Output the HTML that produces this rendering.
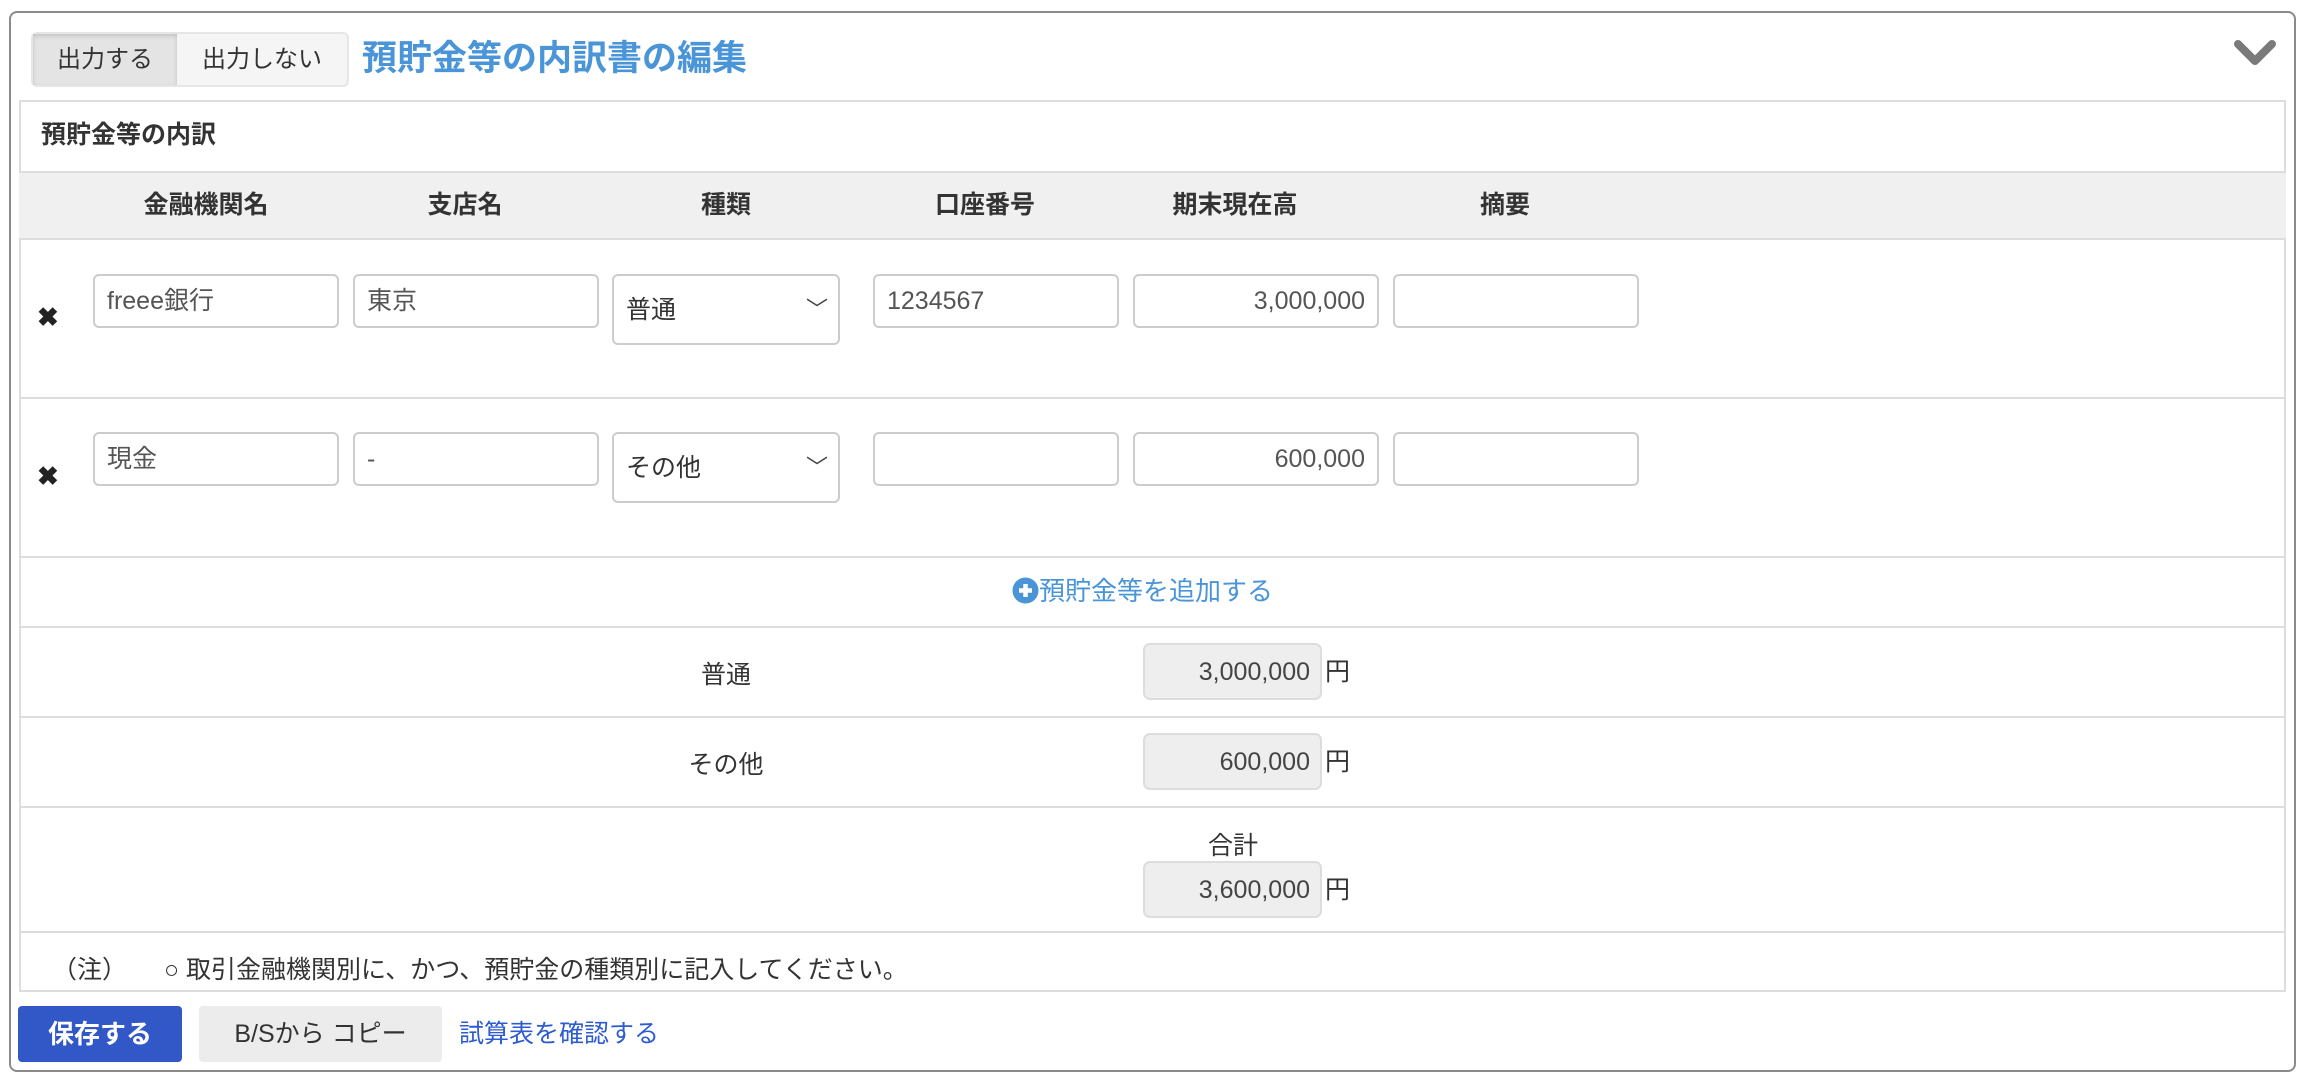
<!DOCTYPE html>
<html><head><meta charset="utf-8"><style>
*{box-sizing:border-box;margin:0;padding:0}
body{width:2308px;height:1082px;background:#fff;font-family:"Liberation Sans","Noto Sans CJK JP",sans-serif;color:#333;position:relative;overflow:hidden;font-size:25px}
.a{position:absolute}
.panel{left:9px;top:11px;width:2287px;height:1061px;border:2px solid #8a8a8a;border-radius:8px}
.inner{left:19px;top:100px;width:2267px;height:892px;border:2px solid #ddd}
.hl{position:absolute;left:19px;width:2267px;height:2px;background:#ddd}
.inp{position:absolute;height:54px;border:2px solid #ccc;border-radius:6px;background:#fff;padding:0 12px;line-height:50px;color:#555;font-size:25px}
.sel{height:71px;line-height:68px;color:#333}
.ro{position:absolute;width:179px;height:57px;background:#eee;border:2px solid #ddd;border-radius:7px;text-align:right;padding-right:10px;line-height:54px;font-size:25px;color:#444}
.th{position:absolute;top:171px;height:69px;line-height:69px;font-weight:bold;text-align:center;transform:translateX(-50%);font-size:25px;color:#333}
.x{position:absolute;font-size:26px;font-weight:bold;color:#222}
.lab{position:absolute;transform:translateX(-50%);font-size:25px}
</style></head><body>
<div class="a panel"></div>
<div class="a" style="left:31px;top:32px;width:318px;height:55px;border:2px solid #e6e6e6;border-radius:6px;background:#f5f5f5"></div>
<div class="a" style="left:33px;top:34px;width:144px;height:51px;background:#e4e4e4;box-shadow:inset 0 2px 5px rgba(0,0,0,.15);text-align:center;line-height:51px;font-size:24px;color:#333">出力する</div>
<div class="a" style="left:177px;top:34px;width:170px;height:51px;text-align:center;line-height:51px;font-size:24px;color:#333">出力しない</div>
<div class="a" style="left:362px;top:34px;font-size:35px;font-weight:bold;color:#4a94d8;line-height:50px">預貯金等の内訳書の編集</div>
<svg class="a" style="left:2233px;top:38px" width="44" height="32" viewBox="0 0 44 32"><path d="M5 6 L22 23 L39 6" fill="none" stroke="#7a7a7a" stroke-width="8" stroke-linecap="round" stroke-linejoin="round"/></svg>
<div class="a inner"></div>
<div class="a" style="left:41px;top:100px;height:71px;line-height:71px;font-weight:bold;font-size:25px">預貯金等の内訳</div>
<div class="a" style="left:19px;top:171px;width:2267px;height:69px;background:#f0f0f0;border-top:2px solid #ddd;border-bottom:2px solid #ddd"></div>
<div class="th" style="left:206px">金融機関名</div>
<div class="th" style="left:465px">支店名</div>
<div class="th" style="left:726px">種類</div>
<div class="th" style="left:985px">口座番号</div>
<div class="th" style="left:1235px">期末現在高</div>
<div class="th" style="left:1505px">摘要</div>
<!-- row1 -->
<div class="x" style="left:37px;top:302px">✖</div>
<div class="inp" style="left:93px;top:274px;width:246px">freee銀行</div>
<div class="inp" style="left:353px;top:274px;width:246px">東京</div>
<div class="inp sel" style="left:612px;top:274px;width:228px">普通<span style="position:absolute;right:10px;top:0;font-size:22px;color:#444">﹀</span></div>
<div class="inp" style="left:873px;top:274px;width:246px">1234567</div>
<div class="inp" style="left:1133px;top:274px;width:246px;text-align:right">3,000,000</div>
<div class="inp" style="left:1393px;top:274px;width:246px"></div>
<div class="hl" style="top:397px"></div>
<!-- row2 -->
<div class="x" style="left:37px;top:461px">✖</div>
<div class="inp" style="left:93px;top:432px;width:246px">現金</div>
<div class="inp" style="left:353px;top:432px;width:246px">-</div>
<div class="inp sel" style="left:612px;top:432px;width:228px">その他<span style="position:absolute;right:10px;top:0;font-size:22px;color:#444">﹀</span></div>
<div class="inp" style="left:873px;top:432px;width:246px"></div>
<div class="inp" style="left:1133px;top:432px;width:246px;text-align:right">600,000</div>
<div class="inp" style="left:1393px;top:432px;width:246px"></div>
<div class="hl" style="top:556px"></div>
<div class="a" style="left:1012px;top:568px;line-height:46px;font-size:26px;color:#4a94d8;white-space:nowrap"><svg width="27" height="27" viewBox="0 0 27 27" style="vertical-align:-4px"><circle cx="13.5" cy="13.5" r="13" fill="#4a94d8"/><path d="M13.5 7v13M7 13.5h13" stroke="#fff" stroke-width="4.5"/></svg>預貯金等を追加する</div>
<div class="hl" style="top:626px"></div>
<div class="lab" style="left:726px;top:655px">普通</div>
<div class="ro" style="left:1143px;top:643px">3,000,000</div>
<div class="a" style="left:1325px;top:652px">円</div>
<div class="hl" style="top:716px"></div>
<div class="lab" style="left:726px;top:745px">その他</div>
<div class="ro" style="left:1143px;top:733px">600,000</div>
<div class="a" style="left:1325px;top:742px">円</div>
<div class="hl" style="top:806px"></div>
<div class="lab" style="left:1233px;top:826px">合計</div>
<div class="ro" style="left:1143px;top:861px">3,600,000</div>
<div class="a" style="left:1325px;top:870px">円</div>
<div class="hl" style="top:931px"></div>
<div class="a" style="left:52px;top:950px;font-size:25px">（注）</div>
<div class="a" style="left:164px;top:950px;font-size:25px">○ 取引金融機関別に、かつ、預貯金の種類別に記入してください。</div>
<div class="a" style="left:18px;top:1006px;width:164px;height:56px;background:#3257c6;border-radius:4px;color:#fff;font-weight:bold;font-size:26px;text-align:center;line-height:56px">保存する</div>
<div class="a" style="left:199px;top:1006px;width:243px;height:56px;background:#ececec;border-radius:4px;color:#333;font-size:25px;text-align:center;line-height:56px">B/Sから コピー</div>
<div class="a" style="left:459px;top:1006px;line-height:56px;font-size:25px;color:#2d5bd0">試算表を確認する</div>
</body></html>
